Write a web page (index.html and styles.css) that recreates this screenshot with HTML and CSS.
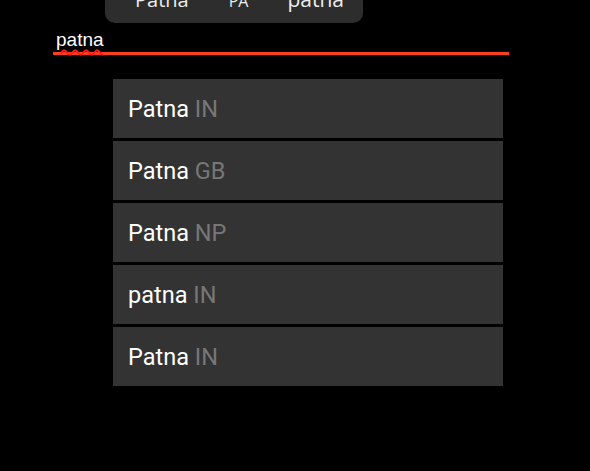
FILE: index.html
```html
<!DOCTYPE html>
<html>
<head>
<meta charset="utf-8">
<link rel="stylesheet" href="styles.css">
</head>
<body>
<div class="panel">
  <span class="cell cell-name">Patna</span>
  <span class="cell cell-code">PA</span>
  <span class="cell cell-raw">patna</span>
</div>
<div class="search">
  <span class="search-text">patna</span>
</div>
<ul class="results">
  <li class="result"><span class="label"><span class="city">Patna</span> <span class="country">IN</span></span></li>
  <li class="result"><span class="label"><span class="city">Patna</span> <span class="country">GB</span></span></li>
  <li class="result"><span class="label"><span class="city">Patna</span> <span class="country">NP</span></span></li>
  <li class="result"><span class="label"><span class="city">patna</span> <span class="country">IN</span></span></li>
  <li class="result"><span class="label"><span class="city">Patna</span> <span class="country">IN</span></span></li>
</ul>
</body>
</html>
```
FILE: styles.css
```css
html, body {
  margin: 0;
  padding: 0;
  background: #000;
}
body {
  width: 590px;
  height: 471px;
  overflow: hidden;
}
.panel {
  margin: -15px 0 0 105px;
  width: 258px;
  height: 38px;
  box-sizing: border-box;
  background: #2d2d2d;
  border-radius: 0 0 10px 10px;
  display: flex;
  align-items: baseline;
  padding: 0 0 0 30px;
  font-family: "Open Sans", sans-serif;
  color: #eeeeee;
  line-height: 28px;
}
.cell-name { font-size: 20px; }
.cell-code { font-size: 16px; margin-left: 40px; }
.cell-raw { font-size: 21px; margin-left: 39px; }
.search {
  margin: 6px 0 0 53px;
  width: 456px;
  height: 26px;
  box-sizing: border-box;
  border-bottom: 3px solid #ff3d1f;
  padding-left: 3px;
  font-family: "Liberation Sans", Arial, sans-serif;
  font-size: 19px;
  line-height: 22px;
  color: #fff;
}
.search-text {
  text-decoration: underline wavy #ff1a1a;
  text-decoration-thickness: 1.5px;
  text-underline-offset: 3px;
}
.results {
  list-style: none;
  margin: 24px 0 0 113px;
  padding: 0;
  width: 390px;
  display: flex;
  flex-direction: column;
  gap: 3px;
}
.result {
  height: 59px;
  background: #333333;
  display: flex;
  align-items: center;
  padding-left: 15px;
  font-family: Roboto, sans-serif;
  font-size: 23.5px;
}
.city { color: #ffffff; }
.country { color: #777777; }
```
